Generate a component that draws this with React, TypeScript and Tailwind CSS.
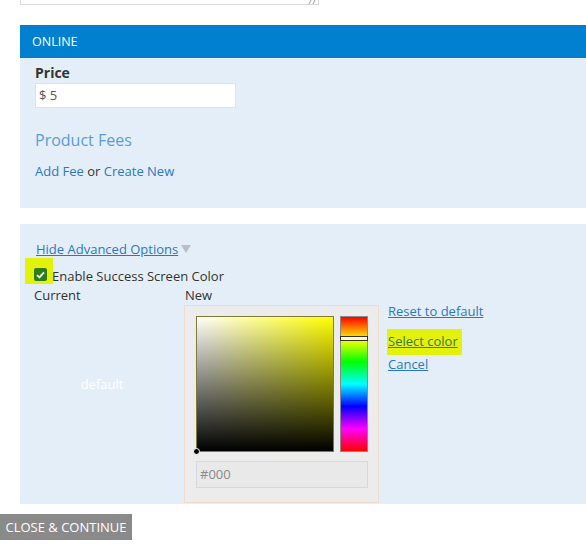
import React from 'react';

const font = { fontFamily: '"Open Sans", "Liberation Sans", sans-serif' };

function HuePicker() {
	return (
		<div className="w-[195px] h-[198px] border border-[#f1dccb] bg-[#ececec] pt-[10px] pl-[11px]">
			<div className="flex gap-[6px]">
				<div className="relative w-[138px] h-[136px] border border-[#7d7a3a] bg-[linear-gradient(to_right,#ffffff,#ffff00)]">
					<div className="absolute inset-0 bg-[linear-gradient(to_bottom,rgba(0,0,0,0),#000000)]" />
					<div className="absolute -left-[4px] -bottom-[4px] w-[7px] h-[7px] rounded-full bg-black border border-white" />
				</div>
				<div className="relative w-[28px] h-[136px] border border-[#8a8a8a] bg-[linear-gradient(to_bottom,#ff0000,#ffff00_16.66%,#00ff00_33.33%,#00ffff_50%,#0000ff_66.66%,#ff00ff_83.33%,#ff0000)]">
					<div className="absolute -left-px -right-px top-[19px] h-[5px] border border-[#333] bg-[#ffffc8]" />
				</div>
			</div>
			<div className="mt-[9px] w-[172px] h-[27px] border border-[#d3d9df] bg-[#e9e9e9] pl-[3px] text-[13px] leading-[25px] text-[#8a8a8a]">
				#000
			</div>
		</div>
	);
}

export default function App() {
	return (
		<div className="w-[586px] h-[544px] bg-white overflow-hidden text-[#333]" style={font}>
			<div className="pl-[20px]">
				<div className="relative w-[299px] h-[5px] border border-t-0 border-[#d6dade]">
					<svg className="absolute right-[2px] top-0" width="8" height="4" viewBox="0 0 8 4">
						<path d="M1 4 L3 0 M5 4 L7 0" stroke="#9a9a9a" strokeWidth="1" />
					</svg>
				</div>

				<div className="mt-[20px] h-[33px] bg-[#0180d0] pl-[12px] text-white text-[12.5px] leading-[33px]">
					ONLINE
				</div>

				<div className="h-[150px] bg-[#e4eef8] pl-[15px] pt-[6px]">
					<div className="text-[14px] font-bold leading-[18px] text-[#333]">Price</div>
					<div className="mt-[1px] w-[201px] h-[25px] border border-[#dfe3e6] bg-white pl-[3px] text-[13px] leading-[23px] text-[#555]">
						$ 5
					</div>
					<div className="mt-[22px] text-[16px] leading-[20px] text-[#5a9dd6]">Product Fees</div>
					<div className="mt-[12px] text-[13px] leading-[18px] text-[#333]">
						<span className="text-[#2b78c2]">Add Fee</span> or{' '}
						<span className="text-[#2b78c2]">Create New</span>
					</div>
				</div>

				<div className="mt-[16px] h-[280px] bg-[#e4eef8] pt-[16px]">
					<div className="pl-[16px] flex items-center gap-[3px] text-[13px] leading-[18px]">
						<span className="underline text-[#2b78c2]">Hide Advanced Options</span>
						<svg width="10" height="9" viewBox="0 0 10 9">
							<path d="M0 0 L10 0 L5 8 Z" fill="#b9bfc6" />
						</svg>
					</div>

					<div className="flex items-end h-[26px] pl-[5px]">
						<div className="w-[28px] h-[26px] bg-[#e2f20d] pl-[9px] pt-[10px]">
							<div className="w-[13px] h-[13px] rounded-[2px] bg-[#2f7d19] flex items-center justify-center">
								<svg width="9" height="8" viewBox="0 0 9 8">
									<path d="M1 4.2 L3.4 6.4 L8 1.3" stroke="white" strokeWidth="1.8" fill="none" />
								</svg>
							</div>
						</div>
						<span className="text-[13px] leading-[18px] -ml-px mb-[-1px]">Enable Success Screen Color</span>
					</div>

					<div className="flex text-[13px] leading-[18px] mt-[2px]">
						<span className="w-[165px] pl-[14px]">Current</span>
						<span>New</span>
					</div>

					<div className="flex mt-[1px]">
						<div className="w-[164px] pt-[70px] text-center text-[13px] leading-[18px] text-white">default</div>
						<HuePicker />
						<div className="pl-[8px] -mt-[3px] text-[13px] leading-[18px] text-[#2b78c2]">
							<div className="pl-[1px] underline">Reset to default</div>
							<div className="mt-[9px] w-[75px] h-[26px] bg-[#e2f20d] pl-[1px] pt-[3px]">
								<span className="underline text-[#3d7a35]">Select color</span>
							</div>
							<div className="pl-[1px] underline">Cancel</div>
						</div>
					</div>
				</div>
			</div>

			<div className="mt-[10px] w-[132px] h-[26px] bg-[#8a8a8a] text-white text-[13px] leading-[26px] text-center">
				CLOSE &amp; CONTINUE
			</div>
		</div>
	);
}
